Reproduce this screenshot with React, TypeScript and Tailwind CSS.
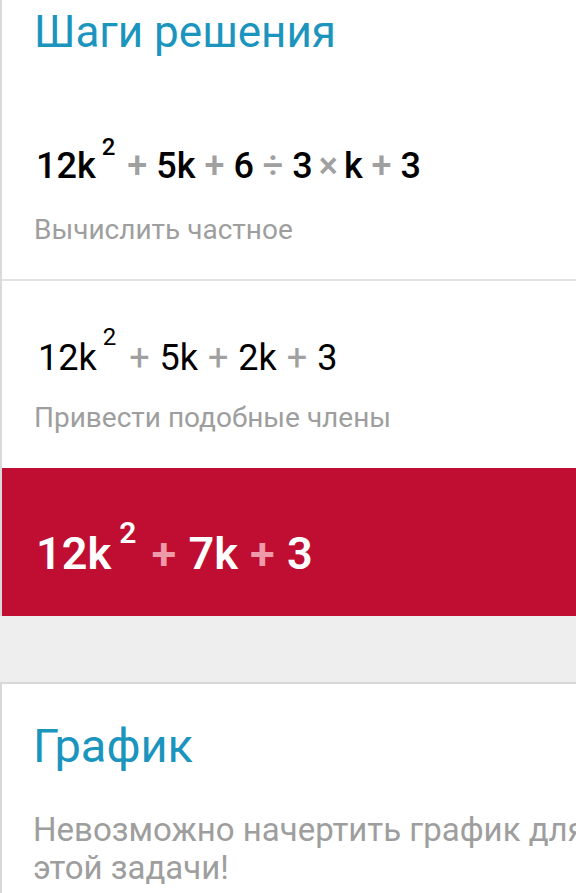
import React from "react";

type Part = { t: string; op?: boolean; sup?: boolean; cls?: string };

const step1: Part[] = [
  { t: "12k" },
  { t: "2", sup: true },
  { t: "+", op: true },
  { t: "5k" },
  { t: "+", op: true },
  { t: "6" },
  { t: "÷", op: true },
  { t: "3" },
  { t: "×", op: true, cls: "-mx-[3px]" },
  { t: "k" },
  { t: "+", op: true },
  { t: "3" },
];

const step2: Part[] = [
  { t: "12k" },
  { t: "2", sup: true },
  { t: "+", op: true },
  { t: "5k" },
  { t: "+", op: true },
  { t: "2k" },
  { t: "+", op: true },
  { t: "3" },
];

const result: Part[] = [
  { t: "12k" },
  { t: "2", sup: true },
  { t: "+", op: true },
  { t: "7k" },
  { t: "+", op: true },
  { t: "3" },
];

function Formula({ parts, opClass, supClass }: { parts: Part[]; opClass: string; supClass: string }) {
  return (
    <>
      {parts.map((p, i) =>
        p.sup ? (
          <span key={i} className={supClass}>
            {p.t}
          </span>
        ) : p.op ? (
          <span key={i} className={`${opClass} ${p.cls ?? ""}`}>
            {" "}
            {p.t}{" "}
          </span>
        ) : (
          <span key={i}>{p.t}</span>
        )
      )}
    </>
  );
}

export default function App() {
  return (
    <div
      className="w-[576px] h-[893px] overflow-hidden bg-[#eeeeee]"
      style={{ fontFamily: "Roboto, 'Noto Sans', sans-serif" }}
    >
      {/* steps card */}
      <div className="w-[700px] border-l-2 border-[#dadada] bg-white">
        <div className="pl-[32px] pt-[6px]">
          <h2 className="text-[44px] leading-[52px] text-[#1b95bd]">Шаги решения</h2>
        </div>

        <div className="pl-[34px] pt-[84px] pb-[31px]">
          <div className="text-[36px] leading-[48px] font-medium text-black whitespace-nowrap">
            <Formula
              parts={step1}
              opClass="text-[#a0a0a0]"
              supClass="text-[24px] leading-[0px] align-[23px] ml-[6px] mr-[3px]"
            />
          </div>
          <div className="mt-[22px] -ml-[2px] text-[28px] leading-[36px] text-[#9e9e9e]">Вычислить частное</div>
        </div>

        <div className="h-[2px] bg-[#e2e2e2]" />

        <div className="pl-[36px] pt-[53px] pb-[32px]">
          <div className="text-[36px] leading-[48px] text-black whitespace-nowrap">
            <Formula
              parts={step2}
              opClass="text-[#a0a0a0] mx-[1px]"
              supClass="text-[24px] leading-[0px] align-[25px] ml-[6px] mr-[3px]"
            />
          </div>
          <div className="mt-[18px] -ml-[4px] text-[28px] leading-[36px] text-[#9e9e9e]">Привести подобные члены</div>
        </div>

        <div className="bg-[#bf0e31] pl-[34px] pt-[57px] pb-[34px]">
          <div className="text-[45px] leading-[57px] font-semibold text-white whitespace-nowrap">
            <Formula
              parts={result}
              opClass="text-[#ee9aab] mx-[1px]"
              supClass="text-[30px] leading-[0px] align-[26px] ml-[8px] mr-[3px]"
            />
          </div>
        </div>
      </div>

      {/* graph card */}
      <div className="mt-[66px] w-[700px] border-l-2 border-t-2 border-[#d8d8d8] bg-white pb-[20px]">
        <div className="pl-[31px] pt-[35px]">
          <h2 className="text-[47px] leading-[54px] text-[#1b95bd]">График</h2>
        </div>
        <div className="pl-[31px] mt-[38px] text-[33px] leading-[38px] text-[#9e9e9e]">
          Невозможно начертить график для
          <br />
          этой задачи!
        </div>
      </div>
    </div>
  );
}
